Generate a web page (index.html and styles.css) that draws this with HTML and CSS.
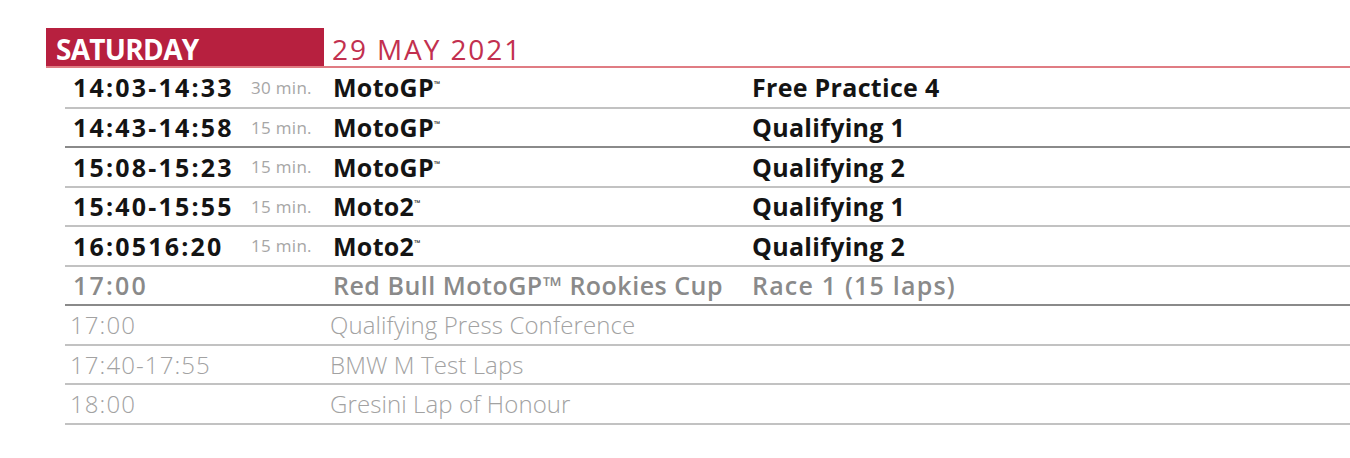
FILE: index.html
```html
<!DOCTYPE html>
<html lang="en">
<head>
<meta charset="utf-8">
<title>Saturday schedule</title>
<link rel="stylesheet" href="styles.css">
</head>
<body>
<div class="sched">
  <div class="head">
    <div class="day">SATURDAY</div>
    <div class="date">29 MAY 2021</div>
  </div>
  <div class="rows">
    <div class="row main first">
      <span class="time">14:03-14:33</span><span class="dur">30 min.</span><span class="cls">MotoGP<span class="tm">™</span></span><span class="sess">Free Practice 4</span>
    </div>
    <div class="row main dark">
      <span class="time">14:43-14:58</span><span class="dur">15 min.</span><span class="cls">MotoGP<span class="tm">™</span></span><span class="sess">Qualifying 1</span>
    </div>
    <div class="row main">
      <span class="time">15:08-15:23</span><span class="dur">15 min.</span><span class="cls">MotoGP<span class="tm">™</span></span><span class="sess">Qualifying 2</span>
    </div>
    <div class="row main">
      <span class="time">15:40-15:55</span><span class="dur">15 min.</span><span class="cls">Moto2<span class="tm">™</span></span><span class="sess">Qualifying 1</span>
    </div>
    <div class="row main">
      <span class="time">16:0516:20</span><span class="dur">15 min.</span><span class="cls">Moto2<span class="tm">™</span></span><span class="sess">Qualifying 2</span>
    </div>
    <div class="row semi dark">
      <span class="time">17:00</span><span class="dur"></span><span class="cls">Red Bull MotoGP™ Rookies Cup</span><span class="sess">Race 1 (15 laps)</span>
    </div>
    <div class="row light">
      <span class="time">17:00</span><span class="dur"></span><span class="cls">Qualifying Press Conference</span><span class="sess"></span>
    </div>
    <div class="row light">
      <span class="time">17:40-17:55</span><span class="dur"></span><span class="cls">BMW M Test Laps</span><span class="sess"></span>
    </div>
    <div class="row light">
      <span class="time">18:00</span><span class="dur"></span><span class="cls">Gresini Lap of Honour</span><span class="sess"></span>
    </div>
  </div>
</div>
</body>
</html>
```

FILE: styles.css
```css
html, body {
  margin: 0;
  padding: 0;
  background: #ffffff;
}

body {
  font-family: "Open Sans", "Liberation Sans", sans-serif;
  width: 1350px;
  height: 458px;
  overflow: hidden;
}

.sched {
  padding-top: 28px;
}

.head {
  display: flex;
  margin-left: 46px;
  border-bottom: 2px solid #e07c83;
}

.day {
  width: 278px;
  height: 38px;
  box-sizing: border-box;
  padding: 4px 0 0 10px;
  line-height: 34px;
  background: #b7203f;
  color: #ffffff;
  font-size: 28px;
  font-weight: 700;
  letter-spacing: -0.7px;
}

.date {
  padding: 4px 0 0 8px;
  line-height: 34px;
  color: #c2304f;
  font-size: 28px;
  font-weight: 400;
  letter-spacing: 1.9px;
}

.rows {
  margin-left: 65px;
}

.row {
  display: grid;
  grid-template-columns: 178px 82px 419px 1fr;
  align-items: center;
  height: 37.5px;
  padding-left: 8px;
  border-bottom: 2px solid #c2c2c2;
  white-space: nowrap;
}

.row.first {
  height: 38.5px;
}

.row.dark {
  border-bottom-color: #8a8a8a;
}

.main {
  color: #141414;
  font-size: 25px;
  font-weight: 700;
}

.main .time {
  letter-spacing: 2.2px;
}

.main .cls,
.main .sess {
  letter-spacing: 0.3px;
}

.dur {
  color: #a6a6a6;
  font-size: 17px;
  font-weight: 400;
  letter-spacing: 0.3px;
}

.tm {
  font-size: 8px;
  vertical-align: 10px;
  letter-spacing: 0;
}

.semi {
  color: #8a8a8a;
  font-size: 25px;
  font-weight: 600;
}

.semi .time {
  letter-spacing: 2.2px;
}

.semi .cls {
  letter-spacing: 0.5px;
}

.semi .sess {
  letter-spacing: 1.2px;
}

.light {
  padding-left: 5px;
  color: #a2a2a2;
  font-size: 24px;
  font-weight: 300;
}

.light .time {
  letter-spacing: 1.1px;
}

.light .cls {
  letter-spacing: 0.1px;
}
```
